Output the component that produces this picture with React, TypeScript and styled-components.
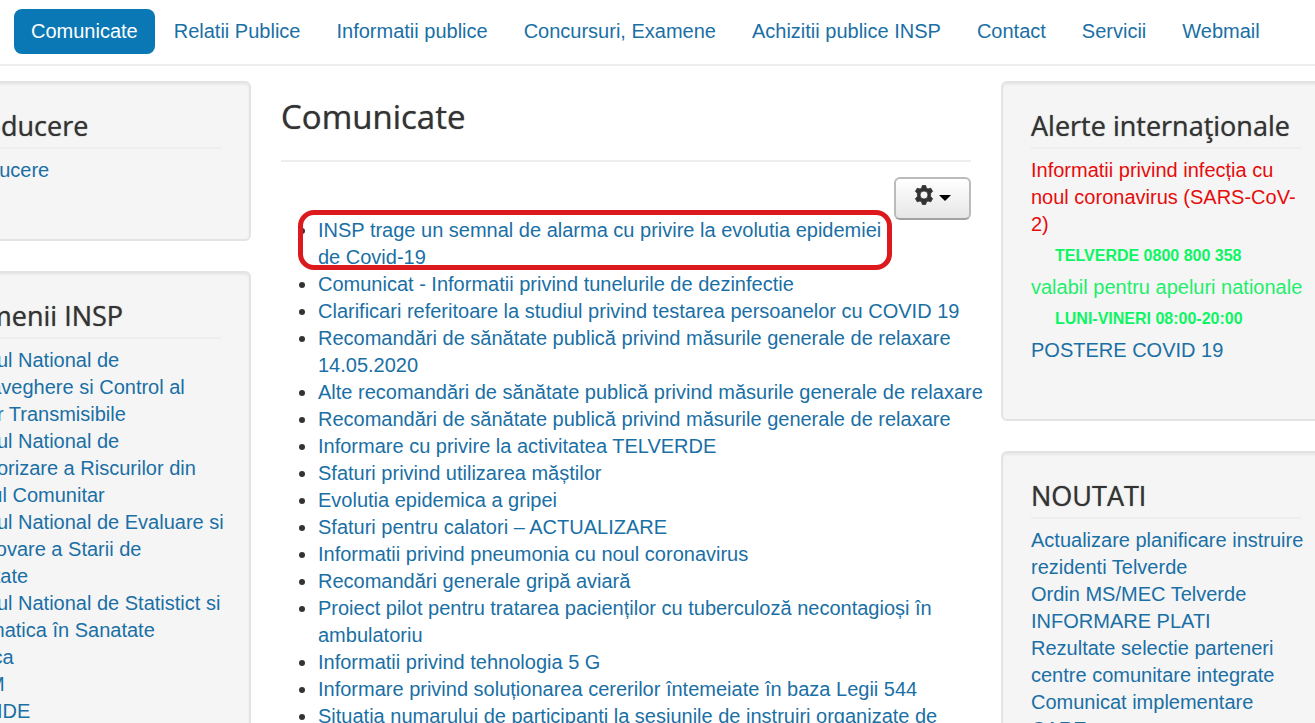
import React from "react";
import styled, { createGlobalStyle, css } from "styled-components";

const GlobalStyle = createGlobalStyle`
  *, *::before, *::after { box-sizing: border-box; }
  html, body { margin: 0; height: 100%; overflow: hidden; }
  body {
    background: #fff;
    color: #333;
    font-family: "Liberation Sans", Arial, sans-serif;
    font-size: 20px;
    line-height: 27px;
  }
`;

const Page = styled.div`
  height: 100vh;
  overflow: hidden;
`;

const Header = styled.header`
  padding: 9px 14px 10px;
  border-bottom: 2px solid #eee;
`;

const NavList = styled.ul`
  display: flex;
  gap: 2px;
  margin: 0;
  padding: 0;
  list-style: none;
`;

const NavLink = styled.a<{ $active?: boolean }>`
  display: block;
  padding: 9px 17px;
  border-radius: 8px;
  color: #1a6fa5;
  text-decoration: none;
  white-space: nowrap;
  ${(p) =>
    p.$active &&
    css`
      background: #0a78b4;
      color: #fff;
    `}
`;

const Columns = styled.div`
  display: grid;
  grid-template-columns: 330px minmax(0, 1fr) 330px;
  gap: 30px;
  align-items: start;
  margin: 15px -16px 0 -79px;
`;

const Sidebar = styled.aside`
  display: flex;
  flex-direction: column;
  gap: 30px;
`;

const Well = styled.section`
  padding: 28px 28px 55px;
  border: 2px solid #e3e3e3;
  border-radius: 6px;
  background: #f5f5f5;
  box-shadow: inset 0 2px 2px rgba(0, 0, 0, 0.05);
`;

const WellTitle = styled.h3`
  margin: 0 0 8px;
  padding-bottom: 6px;
  border-bottom: 2px solid #eee;
  font: 400 27px/30px "Open Sans", sans-serif;
  text-shadow: 0 0 1px rgba(51, 51, 51, 0.7);
  white-space: nowrap;
`;

const LinkList = styled.ul<{ $side: "left" | "right" }>`
  margin: ${(p) => (p.$side === "left" ? "0 -3px" : "0 -6px 0 0")};
  padding: 0;
  list-style: none;
`;

const TextLink = styled.a<{ $color?: string }>`
  color: ${(p) => p.$color ?? "#1a6fa5"};
  text-decoration: none;
`;

const Hotline = styled.strong`
  display: block;
  padding-left: 24px;
  color: #0cf563;
  font-size: 16px;
  line-height: 36px;
`;

const Main = styled.main``;

const PageTitle = styled.h2`
  margin: 0 0 15px;
  padding: 9px 0 16px;
  border-bottom: 2px solid #eee;
  font: 400 33px/54px "Open Sans", sans-serif;
  text-shadow: 0 0 1px rgba(51, 51, 51, 0.7);
`;

const GearButton = styled.button`
  float: right;
  display: flex;
  justify-content: center;
  align-items: center;
  gap: 5px;
  width: 77px;
  height: 43px;
  margin-left: 10px;
  padding: 0 0 7px;
  border: 2px solid #bbb;
  border-bottom-color: #a2a2a2;
  border-radius: 6px;
  background: linear-gradient(#fff, #e6e6e6);
`;

const Caret = styled.span`
  margin-top: 6px;
  border: 6px solid transparent;
  border-top-color: #000;
  border-bottom: 0;
`;

const Articles = styled.ul`
  margin: 0 -14px 0 0;
  padding: 40px 0 0 37px;
`;

const Article = styled.li<{ $marked?: boolean }>`
  position: relative;
  ${(p) =>
    p.$marked &&
    css`
      &::after {
        content: "";
        position: absolute;
        inset: -7px 93px 1px -20px;
        border: 5px solid #dc1a1d;
        border-radius: 16px;
        pointer-events: none;
      }
    `}
`;

const nav = [
  "Comunicate",
  "Relatii Publice",
  "Informatii publice",
  "Concursuri, Examene",
  "Achizitii publice INSP",
  "Contact",
  "Servicii",
  "Webmail",
];

const domains = [
  "Centrul National de Supraveghere si Control al Bolilor Transmisibile",
  "Centrul National de Monitorizare a Riscurilor din Mediul Comunitar",
  "Centrul National de Evaluare si Promovare a Starii de Sanatate",
  "Centrul National de Statistict si Informatica în Sanatate Publica",
  "SESM",
  "BIOCIDE",
];

const articles = [
  "INSP trage un semnal de alarma cu privire la evolutia epidemiei de Covid-19",
  "Comunicat - Informatii privind tunelurile de dezinfectie",
  "Clarificari referitoare la studiul privind testarea persoanelor cu COVID 19",
  "Recomandări de sănătate publică privind măsurile generale de relaxare 14.05.2020",
  "Alte recomandări de sănătate publică privind măsurile generale de relaxare",
  "Recomandări de sănătate publică privind măsurile generale de relaxare",
  "Informare cu privire la activitatea TELVERDE",
  "Sfaturi privind utilizarea măștilor",
  "Evolutia epidemica a gripei",
  "Sfaturi pentru calatori – ACTUALIZARE",
  "Informatii privind pneumonia cu noul coronavirus",
  "Recomandări generale gripă aviară",
  "Proiect pilot pentru tratarea pacienților cu tuberculoză necontagioși în ambulatoriu",
  "Informatii privind tehnologia 5 G",
  "Informare privind soluționarea cererilor întemeiate în baza Legii 544",
  "Situatia numarului de participanti la sesiunile de instruiri organizate de INSP",
];

const news = [
  "Actualizare planificare instruire rezidenti Telverde",
  "Ordin MS/MEC Telverde",
  "INFORMARE PLATI",
  "Rezultate selectie parteneri centre comunitare integrate",
  "Comunicat implementare CARE",
];

function Links({ items, side }: { items: string[]; side: "left" | "right" }) {
  return (
    <LinkList $side={side}>
      {items.map((item) => (
        <li key={item}>
          <TextLink href="#">{item}</TextLink>
        </li>
      ))}
    </LinkList>
  );
}

function Gear() {
  return (
    <svg width="20" height="20" viewBox="0 0 20 20" aria-hidden="true">
      <path
        fill="#333"
        stroke="#333"
        strokeWidth="0.8"
        strokeLinejoin="round"
        fillRule="evenodd"
        d="M8.300 .5h3.400l.6 2.500 1.700 1L16.800 3.200l1.800 3.200-2 1.900v3.400l2 1.900-1.800 3.200-2.800-.8-1.700 1-.6 2.500H8.300l-.6-2.500-1.700-1-2.800.8-1.800-3.200 2-1.900V8.300l-2-1.900 1.800-3.200 2.800.8 1.700-1zM10 6a4 4 0 1 0 0 8 4 4 0 0 0 0-8z"
      />
    </svg>
  );
}

export default function App() {
  return (
    <Page>
      <GlobalStyle />
      <Header>
        <nav>
          <NavList>
            {nav.map((item, i) => (
              <li key={item}>
                <NavLink href="#" $active={i === 0}>
                  {item}
                </NavLink>
              </li>
            ))}
          </NavList>
        </nav>
      </Header>
      <Columns>
        <Sidebar>
          <Well>
            <WellTitle>Intoducere</WellTitle>
            <Links side="left" items={["Introducere"]} />
          </Well>
          <Well>
            <WellTitle>Domenii INSP</WellTitle>
            <Links side="left" items={domains} />
          </Well>
        </Sidebar>
        <Main>
          <PageTitle>Comunicate</PageTitle>
          <GearButton type="button" aria-label="Optiuni">
            <Gear />
            <Caret />
          </GearButton>
          <Articles>
            {articles.map((item, i) => (
              <Article key={item} $marked={i === 0}>
                <TextLink href="#">{item}</TextLink>
              </Article>
            ))}
          </Articles>
        </Main>
        <Sidebar>
          <Well>
            <WellTitle>Alerte internaţionale</WellTitle>
            <LinkList $side="right">
              <li>
                <TextLink href="#" $color="#e60c0c">
                  Informatii privind infecția cu noul coronavirus (SARS-CoV-2)
                </TextLink>
              </li>
              <li>
                <Hotline>TELVERDE 0800 800 358</Hotline>
                <TextLink href="#" $color="#1fee6c">
                  valabil pentru apeluri nationale
                </TextLink>
                <Hotline>LUNI-VINERI 08:00-20:00</Hotline>
              </li>
              <li>
                <TextLink href="#">POSTERE COVID 19</TextLink>
              </li>
            </LinkList>
          </Well>
          <Well>
            <WellTitle>NOUTATI</WellTitle>
            <Links side="right" items={news} />
          </Well>
        </Sidebar>
      </Columns>
    </Page>
  );
}
